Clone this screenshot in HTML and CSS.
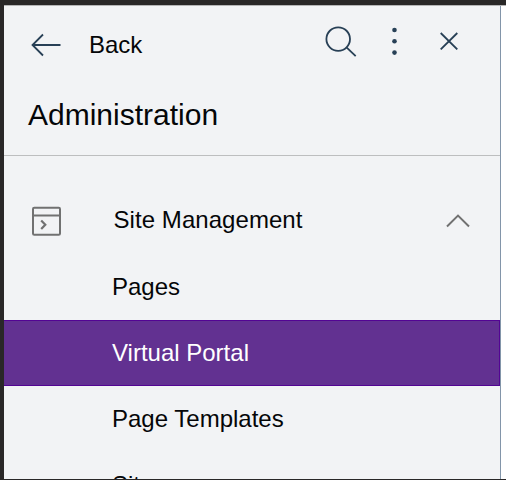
FILE: index.html
```
<!DOCTYPE html>
<html lang="en">
<head>
<meta charset="utf-8">
<title>Administration</title>
<link rel="stylesheet" href="styles.css">
</head>
<body>
<div class="window">
  <nav class="panel">
    <header class="panel-header">
      <div class="toolbar">
        <svg class="icon-back" width="30" height="24" viewBox="0 0 30 24" fill="none"><path d="M29.5 12H1.5M12 1.5L1.5 12L12 22.5"/></svg>
        <span class="back">Back</span>
        <svg class="icon-search" width="32" height="32" viewBox="0 0 32 32"><circle cx="13.2" cy="13.1" r="11.8"/><path d="M21.5 21.4L30.7 30.2"/></svg>
        <svg class="icon-more" width="6" height="30" viewBox="0 0 6 30"><circle cx="3.5" cy="4" r="2.3"/><circle cx="3.5" cy="15.3" r="2.3"/><circle cx="3.5" cy="26.6" r="2.3"/></svg>
        <svg class="icon-close" width="18" height="18" viewBox="0 0 18 18"><path d="M.7 1L17.3 17.4M17.3 1L.7 17.4"/></svg>
      </div>
      <h1 class="title">Administration</h1>
    </header>
    <div class="group">
      <svg class="icon-site" width="29" height="30" viewBox="0 0 29 30"><rect x="1" y="1.7" width="27" height="27" rx="1.3"/><path d="M1 9.5H28"/><path class="prompt" d="M9.2 14.5L13.3 18.7L9.2 22.9"/></svg>
      <span class="group-label">Site Management</span>
      <svg class="icon-collapse" width="24" height="14" viewBox="0 0 24 14"><path d="M1 12.5L12 1.6L23 12.5"/></svg>
    </div>
    <ul class="items">
      <li class="item">Pages</li>
      <li class="item selected">Virtual Portal</li>
      <li class="item">Page Templates</li>
      <li class="item">Site</li>
    </ul>
  </nav>
</div>
</body>
</html>
```

FILE: styles.css
```
* {
  box-sizing: border-box;
}

body {
  margin: 0;
  background: #292727;
  font-family: "Liberation Sans", Arial, sans-serif;
  overflow: hidden;
}

.window {
  height: 480px;
  padding: 5px 0 1px 4px;
}

.panel {
  height: 474px;
  overflow: hidden;
  background: #f2f3f5;
  border-top: 1px solid #b5b5b6;
  box-shadow: inset -5px 0 #fff, inset -6px 0 #8295a9;
  padding-right: 6px;
  color: #050608;
  font-size: 24px;
}

.panel-header {
  height: 150px;
  border-bottom: 1px solid #bdbebf;
}

.toolbar {
  display: flex;
  align-items: flex-start;
  height: 78px;
  padding: 20px 37px 0 27px;
}

.toolbar svg {
  flex: none;
  fill: none;
  stroke: #284056;
  stroke-width: 1.8;
}

.icon-back {
  margin-top: 7px;
}

.back {
  margin-left: 28px;
  line-height: 38px;
}

.icon-search {
  margin-left: auto;
}

.icon-more {
  margin-left: 34px;
}

.toolbar .icon-more {
  fill: #284056;
  stroke: none;
}

.icon-close {
  margin: 6px 5.5px 0 42.5px;
}

.title {
  margin: 0;
  padding-left: 24px;
  font-size: 30px;
  font-weight: 400;
  line-height: 62px;
}

.group {
  display: flex;
  align-items: center;
  height: 98px;
  padding: 31px 30px 0 28px;
}

.group svg {
  flex: none;
  fill: none;
  stroke: #717171;
  stroke-width: 2;
}

.group .prompt {
  stroke-width: 2.2;
}

.group-label {
  margin: 0 0 1px 52.5px;
  letter-spacing: .06px;
}

.icon-collapse {
  margin-left: auto;
}

.items {
  margin: 0;
  padding: 0;
  list-style: none;
}

.item {
  height: 66px;
  padding-left: 108px;
  line-height: 66px;
}

.selected {
  background: #623191;
  border: 1px solid #530493;
  border-left: 0;
  line-height: 64px;
  color: #fff;
}
```
